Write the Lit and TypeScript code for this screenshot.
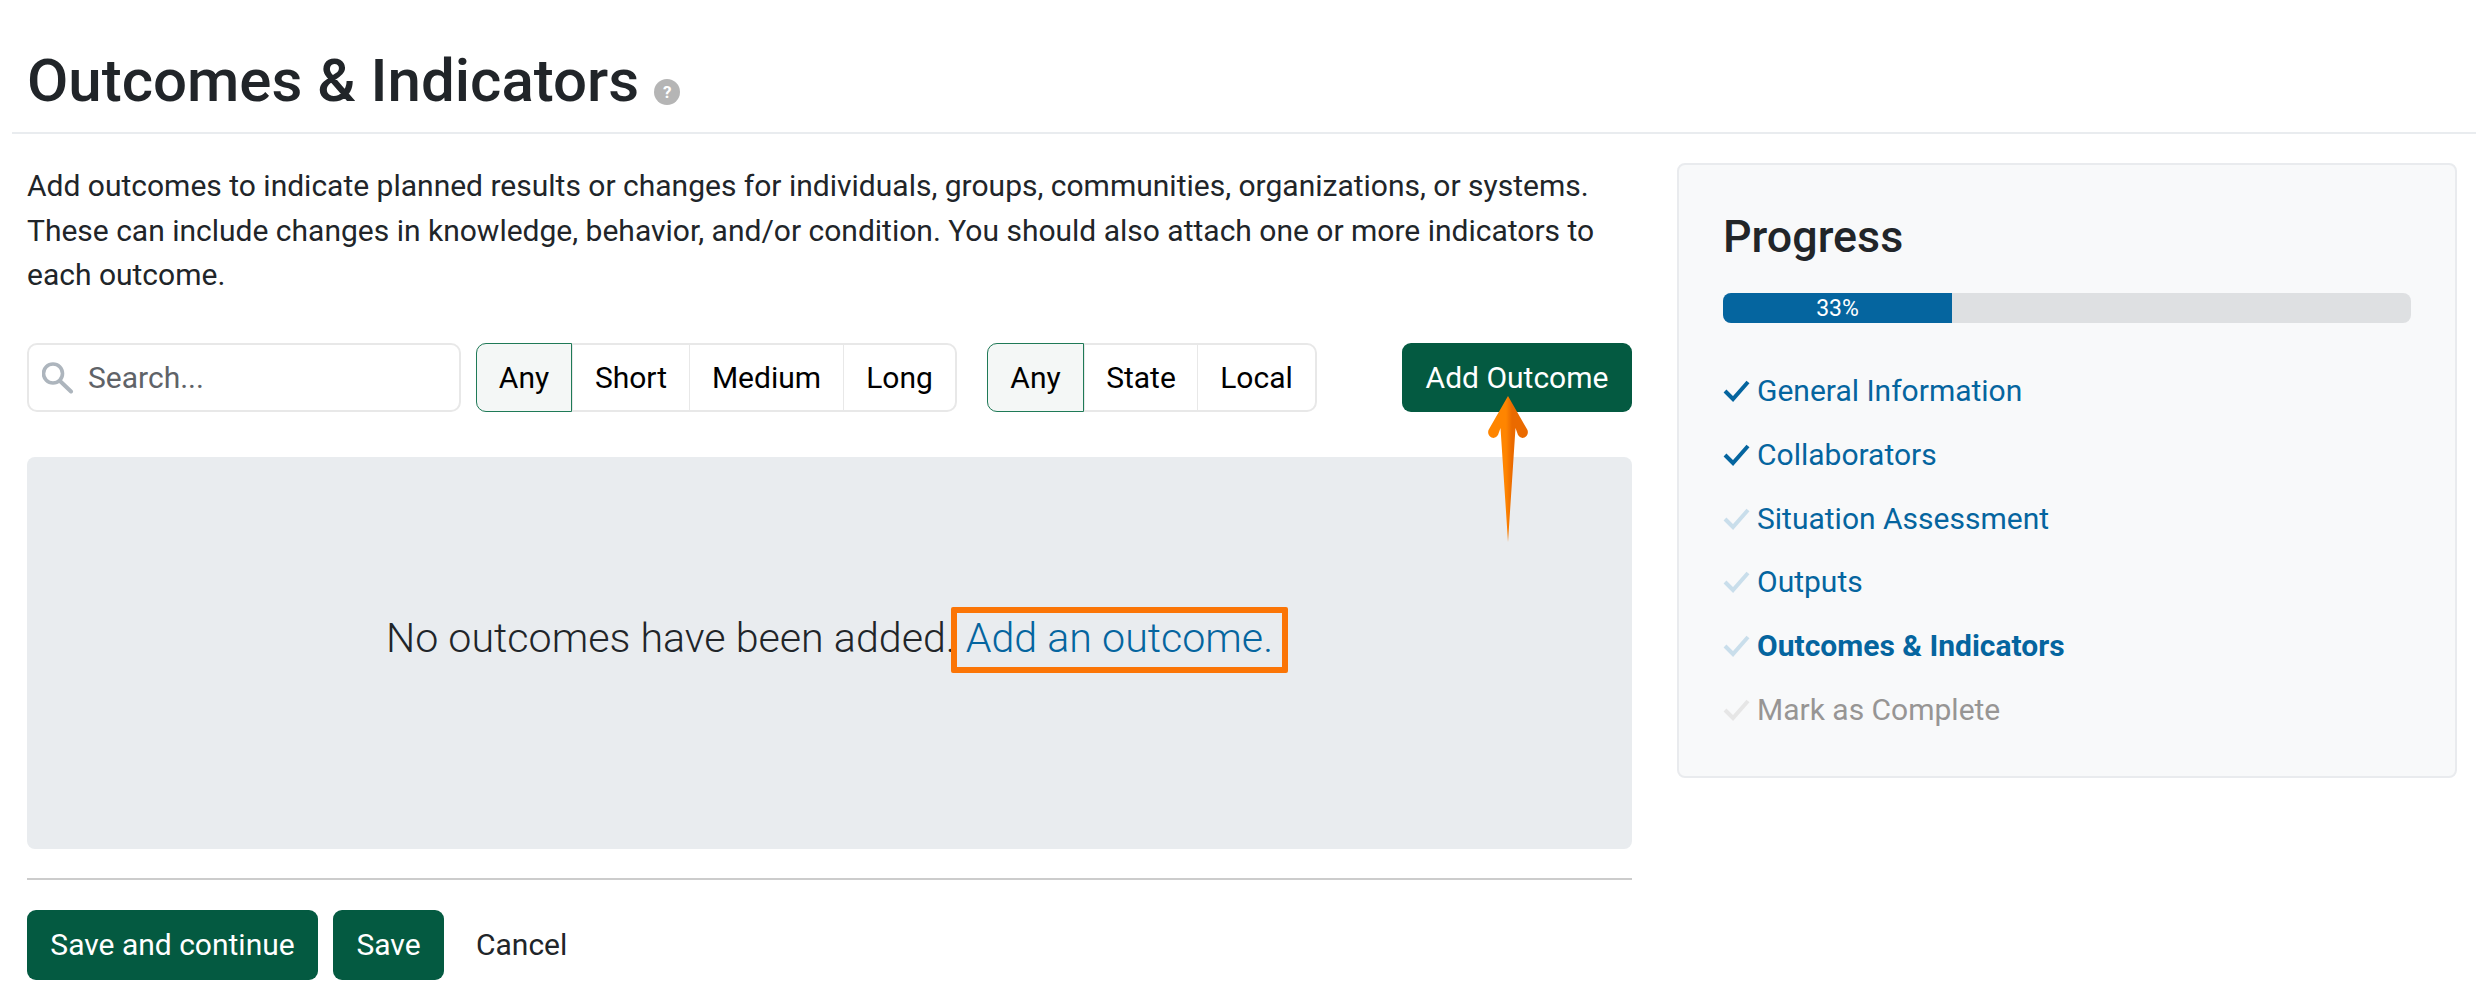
import { LitElement, html, css } from "lit";
import { customElement } from "lit/decorators.js";

const check = (cls: string) => html`<svg class="chk ${cls}" viewBox="0 0 27 22" width="27" height="22"><path d="M2 11 L10 19 L25 2" fill="none" stroke="currentColor" stroke-width="4"/></svg>`;

@customElement("app-root")
export class AppRoot extends LitElement {
  static styles = css`
    :host { display: block; width: 2476px; height: 1005px; position: relative; background: #fff; color: #212529; font-family: Roboto, "Liberation Sans", sans-serif; overflow: hidden; }
    * { box-sizing: border-box; }
    .head { margin-left: 12px; height: 134px; border-bottom: 2px solid #e9ecef; padding: 41px 0 0 15px; display: flex; align-items: flex-start; }
    h1 { margin: 0; font-size: 60px; font-weight: 500; line-height: 80px; }
    .help { width: 26px; height: 26px; border-radius: 50%; background: #b5b5b5; color: #fff; font-size: 17px; font-weight: 700; display: flex; align-items: center; justify-content: center; margin: 38px 0 0 15px; }
    .cols { display: flex; padding: 29px 19px 0 27px; gap: 45px; align-items: flex-start; }
    .main { width: 1605px; flex: none; }
    .intro { margin: 0; font-size: 30px; line-height: 44.5px; padding-top: 1px; }
    .bar { display: flex; margin-top: 45px; height: 69px; align-items: stretch; }
    .search { width: 434px; border: 2px solid #e8e8e8; border-radius: 10px; display: flex; align-items: center; gap: 14px; padding-left: 13px; color: #5f6368; font-size: 30px; }
    .group { display: flex; margin-left: 15px; border: 2px solid #e8e8e8; border-radius: 10px; font-size: 30px; color: #000; }
    .group.second { margin-left: 30px; }
    .group span { display: flex; align-items: center; justify-content: center; border-left: 1px solid #e8e8e8; }
    .group span:first-child { border: 1px solid #1f7a57; margin: -2px 0 -2px -2px; background: #f4f7f6; border-radius: 10px 0 0 10px; }
    .add { margin-left: auto; }
    .btn { display: flex; align-items: center; justify-content: center; background: #045a41; color: #fff; border-radius: 9px; font-size: 30px; }
    .panel { margin-top: 45px; height: 392px; background: #e9ecef; border-radius: 8px; display: block; text-align: center; font-size: 41.2px; font-weight: 300; line-height: 60px; padding-top: 151px; color: #212529; }
    .panel a { color: #05659f; }
    .hl { position: relative; }
    .hl::after { content: ""; position: absolute; left: -15px; right: -15px; top: -7px; bottom: -11px; border: 6px solid #fb7506; border-radius: 2px; }
    hr { margin: 29px 0 0; border: 0; border-top: 2px solid #cccccc; }
    .foot { display: flex; margin-top: 30px; height: 70px; gap: 15px; align-items: stretch; }
    .cancel { display: flex; align-items: center; font-size: 30px; margin-left: 17px; }
    aside { width: 780px; flex: none; height: 615px; background: #f8f9fa; border: 2px solid #e9ebee; border-radius: 8px; padding: 41px 44px; }
    h2 { margin: 0; font-size: 44.8px; font-weight: 500; line-height: 62px; }
    .track { margin-top: 25px; height: 30px; background: #dee0e2; border-radius: 8px; overflow: hidden; }
    .fill { height: 100%; background: #05659f; color: #fff; font-size: 23px; display: flex; align-items: center; justify-content: center; }
    ul { list-style: none; margin: 46px 0 0; padding: 0; display: flex; flex-direction: column; gap: 19.8px; }
    li { display: flex; align-items: center; gap: 7px; font-size: 30px; line-height: 44px; color: #05659f; }
    li.cur { font-weight: 700; }
    li.off { color: #979594; }
    .chk { flex: none; }
    .chk.done { color: #05659f; }
    .chk.todo { color: #c9deeb; }
    .chk.mute { color: #e6e6e6; }
    .arrow { position: absolute; left: 1486px; top: 395px; }
  `;

  private group(items: [string, number][], second = false) {
    return html`<div class="group ${second ? "second" : ""}">${items.map(([t, w]) => html`<span style="width:${w}px">${t}</span>`)}</div>`;
  }

  render() {
    return html`
      <div class="head"><h1>Outcomes &amp; Indicators</h1><div class="help">?</div></div>
      <div class="cols">
        <div class="main">
          <p class="intro">Add outcomes to indicate planned results or changes for individuals, groups, communities, organizations, or systems.<br>These can include changes in knowledge, behavior, and/or condition. You should also attach one or more indicators to<br>each outcome.</p>
          <div class="bar">
            <div class="search">
              <svg width="32" height="34" viewBox="0 0 32 34"><circle cx="11" cy="13.5" r="9.5" fill="none" stroke="#adb5bd" stroke-width="3.6"/><path d="M18 21 L29 31.5" stroke="#adb5bd" stroke-width="4" stroke-linecap="round" fill="none"/></svg>
              <span>Search...</span>
            </div>
            ${this.group([["Any", 96], ["Short", 117], ["Medium", 154], ["Long", 112]])}
            ${this.group([["Any", 97], ["State", 113], ["Local", 118]], true)}
            <div class="btn add" style="width:230px">Add Outcome</div>
          </div>
          <div class="panel">No outcomes have been added. <a class="hl">Add an outcome.</a></div>
          <hr>
          <div class="foot">
            <div class="btn" style="width:291px">Save and continue</div>
            <div class="btn" style="width:111px">Save</div>
            <div class="cancel">Cancel</div>
          </div>
        </div>
        <aside>
          <h2>Progress</h2>
          <div class="track"><div class="fill" style="width:33.3%">33%</div></div>
          <ul>
            <li>${check("done")}General Information</li>
            <li>${check("done")}Collaborators</li>
            <li>${check("todo")}Situation Assessment</li>
            <li>${check("todo")}Outputs</li>
            <li class="cur">${check("todo")}Outcomes &amp; Indicators</li>
            <li class="off">${check("mute")}Mark as Complete</li>
          </ul>
        </aside>
      </div>
      <svg class="arrow" width="44" height="150" viewBox="0 0 44 150">
        <defs><linearGradient id="g" x1="0" x2="1" y1="0" y2="0"><stop offset="0.45" stop-color="#ff8500"/><stop offset="0.6" stop-color="#ea6a00"/></linearGradient></defs>
        <path d="M22 1 L41.5 35 Q43 40 38.5 42.5 Q34.5 44 32 40 L29.5 33 L22 147 L14.5 33 L12 40 Q9.5 44 5.5 42.5 Q1 40 2.5 35 Z" fill="url(#g)"/>
      </svg>
    `;
  }
}
